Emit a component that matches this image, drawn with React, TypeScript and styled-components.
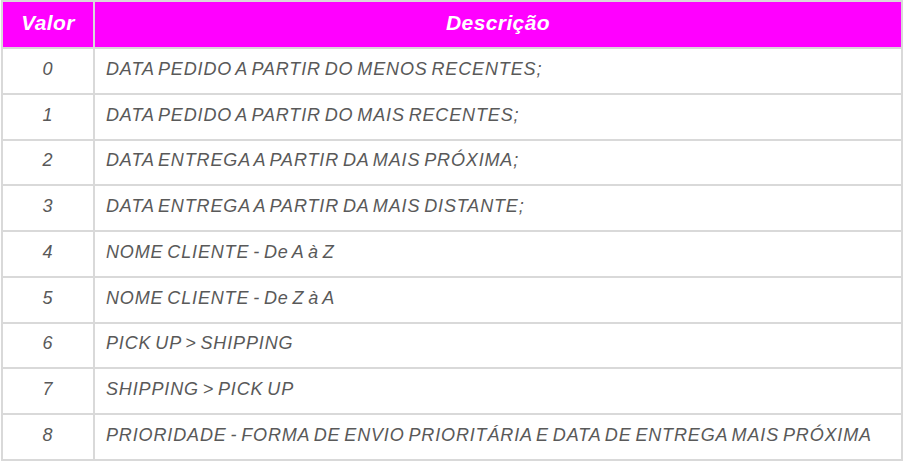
import React from "react";
import styled, { createGlobalStyle } from "styled-components";

const Global = createGlobalStyle`
  html, body { margin: 0; padding: 0; background: #ffffff; }
  body { font-family: "Liberation Sans", Arial, sans-serif; }
`;

const Table = styled.div`
  margin-left: 1px;
  width: 902px;
  box-sizing: border-box;
  border: 2px solid #d9d9d9;
  display: grid;
  grid-template-columns: 90px 2px 1fr;
  grid-template-rows: 45px repeat(9, 2px 43.75px);
  background: #d9d9d9;
`;

const HeadCell = styled.div`
  background: #ff00ff;
  color: #ffffff;
  font-weight: bold;
  font-style: italic;
  font-size: 21px;
  letter-spacing: 0.4px;
  display: flex;
  align-items: center;
  justify-content: center;
  padding-bottom: 3px;
`;

const Cell = styled.div<{ $center?: boolean }>`
  background: #ffffff;
  color: #595959;
  font-style: italic;
  font-size: 18px;
  display: flex;
  align-items: center;
  justify-content: ${(p) => (p.$center ? "center" : "flex-start")};
  padding-left: ${(p) => (p.$center ? "0" : "11px")};
  padding-bottom: 3px;
  letter-spacing: 0.86px;
  word-spacing: -2px;
  white-space: nowrap;
`;

const VLine = styled.div`
  background: #d9d9d9;
`;

const HLine = styled.div`
  grid-column: 1 / -1;
  background: #d9d9d9;
`;

const rows: [string, string][] = [
  ["0", "DATA PEDIDO A PARTIR DO MENOS RECENTES;"],
  ["1", "DATA PEDIDO A PARTIR DO MAIS RECENTES;"],
  ["2", "DATA ENTREGA A PARTIR DA MAIS PRÓXIMA;"],
  ["3", "DATA ENTREGA A PARTIR DA MAIS DISTANTE;"],
  ["4", "NOME CLIENTE - De A à Z"],
  ["5", "NOME CLIENTE - De Z à A"],
  ["6", "PICK UP > SHIPPING"],
  ["7", "SHIPPING > PICK UP"],
  ["8", "PRIORIDADE - FORMA DE ENVIO PRIORITÁRIA E DATA DE ENTREGA MAIS PRÓXIMA"],
];

export default function App() {
  return (
    <>
      <Global />
      <Table>
        <HeadCell>Valor</HeadCell>
        <VLine />
        <HeadCell>Descrição</HeadCell>
        {rows.map(([v, d]) => (
          <React.Fragment key={v}>
            <HLine />
            <Cell $center>{v}</Cell>
            <VLine />
            <Cell>{d}</Cell>
          </React.Fragment>
        ))}
      </Table>
    </>
  );
}
